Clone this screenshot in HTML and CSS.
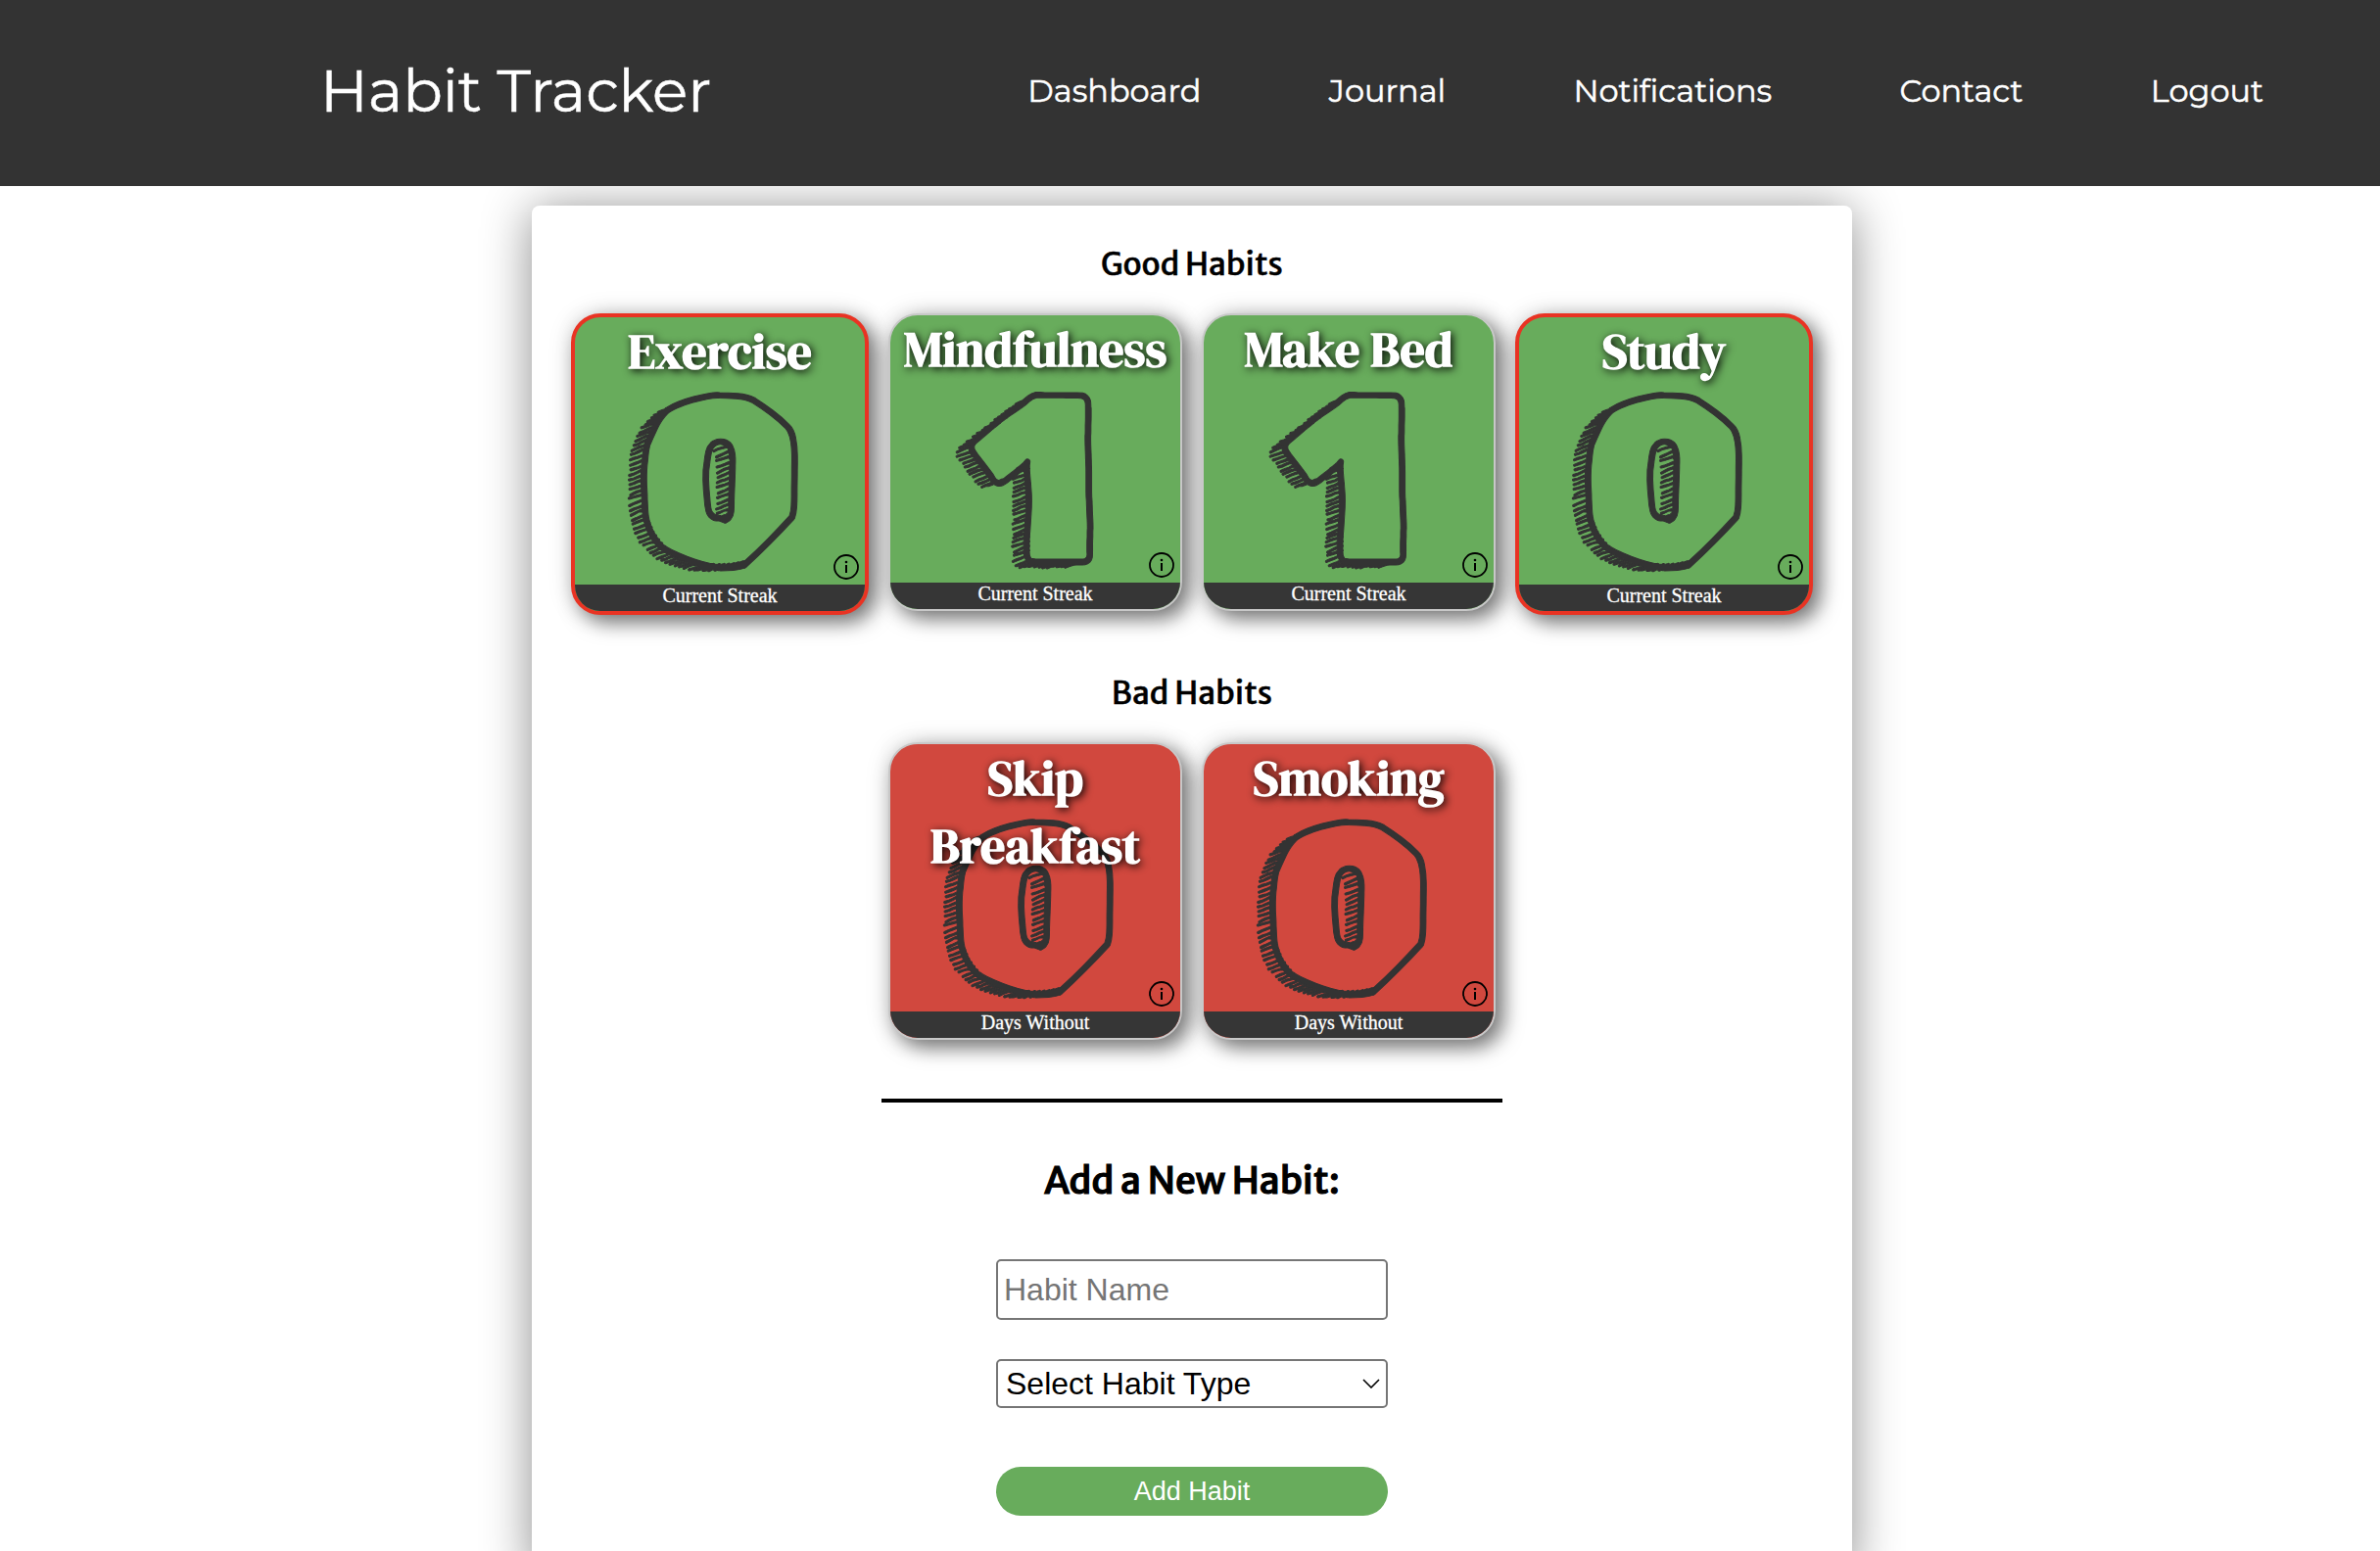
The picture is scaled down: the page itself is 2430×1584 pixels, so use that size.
FILE: index.html
```html
<!DOCTYPE html>
<html lang="en">
<head>
<meta charset="utf-8">
<title>Habit Tracker</title>
<link rel="stylesheet" href="styles.css">
</head>
<body>
<svg width="0" height="0" class="defs" aria-hidden="true">
  <symbol id="info" viewBox="0 0 26 26">
    <circle cx="13" cy="13" r="12" fill="none" stroke="#000" stroke-width="1.8"/>
    <circle cx="13" cy="8" r="1.3"/>
    <path d="M13 11v8" stroke="#000" stroke-width="2"/>
  </symbol>
</svg>
<header class="header">
  <div class="brand">Habit Tracker</div>
  <nav class="nav">
    <a href="#">Dashboard</a>
    <a href="#">Journal</a>
    <a href="#">Notifications</a>
    <a href="#">Contact</a>
    <a href="#">Logout</a>
  </nav>
</header>
<main class="panel">
  <h2 class="section-title">Good Habits</h2>
  <div class="cards">
    <article class="card good due">
      <h3 class="name">Exercise</h3>
      <div class="count">0</div>
      <svg class="info"><use href="#info"/></svg>
      <p class="caption">Current Streak</p>
    </article>
    <article class="card good">
      <h3 class="name">Mindfulness</h3>
      <div class="count">1</div>
      <svg class="info"><use href="#info"/></svg>
      <p class="caption">Current Streak</p>
    </article>
    <article class="card good">
      <h3 class="name">Make Bed</h3>
      <div class="count">1</div>
      <svg class="info"><use href="#info"/></svg>
      <p class="caption">Current Streak</p>
    </article>
    <article class="card good due">
      <h3 class="name">Study</h3>
      <div class="count">0</div>
      <svg class="info"><use href="#info"/></svg>
      <p class="caption">Current Streak</p>
    </article>
  </div>
  <h2 class="section-title later">Bad Habits</h2>
  <div class="cards">
    <article class="card bad">
      <h3 class="name">Skip Breakfast</h3>
      <div class="count">0</div>
      <svg class="info"><use href="#info"/></svg>
      <p class="caption">Days Without</p>
    </article>
    <article class="card bad">
      <h3 class="name">Smoking</h3>
      <div class="count">0</div>
      <svg class="info"><use href="#info"/></svg>
      <p class="caption">Days Without</p>
    </article>
  </div>
  <hr class="rule">
  <form class="form">
    <h2 class="form-title">Add a New Habit:</h2>
    <input class="field" type="text" placeholder="Habit Name">
    <div class="select">
      <select><option>Select Habit Type</option></select>
      <svg class="chevron" viewBox="0 0 18 10"><path d="M1 1l8 8 8-8" fill="none" stroke="#000" stroke-width="1.6"/></svg>
    </div>
    <button class="submit" type="button">Add Habit</button>
  </form>
</main>
</body>
</html>
```
FILE: styles.css
```css
* { box-sizing: border-box; }
html { overflow: hidden; }
body {
  margin: 0;
  height: 100vh;
  overflow: hidden;
  background: #fff;
  color: #000;
  font-family: "Merriweather Sans", "Open Sans", sans-serif;
}
.defs { display: none; }

.header {
  display: flex;
  align-items: center;
  justify-content: space-between;
  height: 190px;
  padding: 0 119px 5px 327px;
  background: #333;
  color: #fff;
  font-family: Montserrat, Inter, sans-serif;
  -webkit-text-stroke: .5px #fff;
}
.brand { font-size: 60px; white-space: nowrap; }
.nav { display: flex; gap: 130.3px; }
.nav a { color: inherit; font-size: 32px; text-decoration: none; }

.panel {
  width: 1348px;
  margin: 20px auto 0 543px;
  padding: 38px 40px 60px;
  border-radius: 8px;
  background: #fff;
  box-shadow: 0 4px 50px rgba(0, 0, 0, .45);
  clip-path: inset(-20px -80px -80px);
}
.section-title {
  margin: 0 0 27px;
  font-size: 32px;
  line-height: 45px;
  font-weight: 400;
  -webkit-text-stroke: .5px #000;
  text-align: center;
}
.later { margin-top: 58px; }

.cards { display: flex; justify-content: center; align-items: flex-start; gap: 20px; }
.card {
  display: grid;
  grid-template: 273px 27px / 296px;
  border: 2px solid #c8c8c8;
  border-radius: 30px;
  overflow: hidden;
  box-shadow: 8px 8px 20px rgba(0, 0, 0, .5), 0 0 25px rgba(0, 0, 0, .15);
}
.good { background: #68ac5c; }
.bad { background: #d1483e; }
.due { border: 4px solid #e93323; }
.name, .count, .info { grid-area: 1 / 1; }
.name {
  z-index: 1;
  margin: 0;
  color: #fff;
  font: bold 50px/69px "DM Serif Display", "Liberation Serif", serif;
  text-align: center;
  text-shadow: 2px 2px 8px #000;
}
.count {
  margin-top: 79px;
  color: #333;
  font: 240px/180px "Rubik Doodle Shadow", "Open Sans", sans-serif;
  -webkit-text-stroke: 1px #333;
  text-align: center;
}
.info {
  align-self: end;
  justify-self: end;
  width: 26px;
  height: 26px;
  margin: 0 6px 5px;
}
.caption {
  margin: 0;
  background: #363636;
  color: #fff;
  font: 20px/23px "Liberation Serif", serif;
  -webkit-text-stroke: .3px #fff;
  text-align: center;
}

.rule { width: 634px; height: 4px; margin: 60px auto 53px; border: 0; background: #000; }
.form { display: flex; flex-direction: column; align-items: center; }
.form-title {
  margin: 0 0 54px;
  font-size: 37.44px;
  line-height: 54px;
  height: 53px;
  font-weight: 400;
  -webkit-text-stroke: 1.2px #000;
}
.field, .select {
  width: 400px;
  border: 2px solid #767676;
  border-radius: 5px;
  background: #fff;
  font: 32px "Liberation Sans", sans-serif;
}
.field { height: 62px; padding: 0 6px; margin-bottom: 40px; }
.field::placeholder { color: #757575; }
.select { display: flex; align-items: center; height: 50px; padding: 0 6px 0 4px; margin-bottom: 60px; }
.select select {
  flex: 1;
  appearance: none;
  border: 0;
  padding: 0 4px;
  background: none;
  color: #000;
  font: inherit;
}
.chevron { width: 18px; height: 10px; }
.submit {
  width: 400px;
  height: 50px;
  border: 0;
  border-radius: 25px;
  background: #68ac5c;
  color: #fff;
  font: 27px "Liberation Sans", sans-serif;
}
```
